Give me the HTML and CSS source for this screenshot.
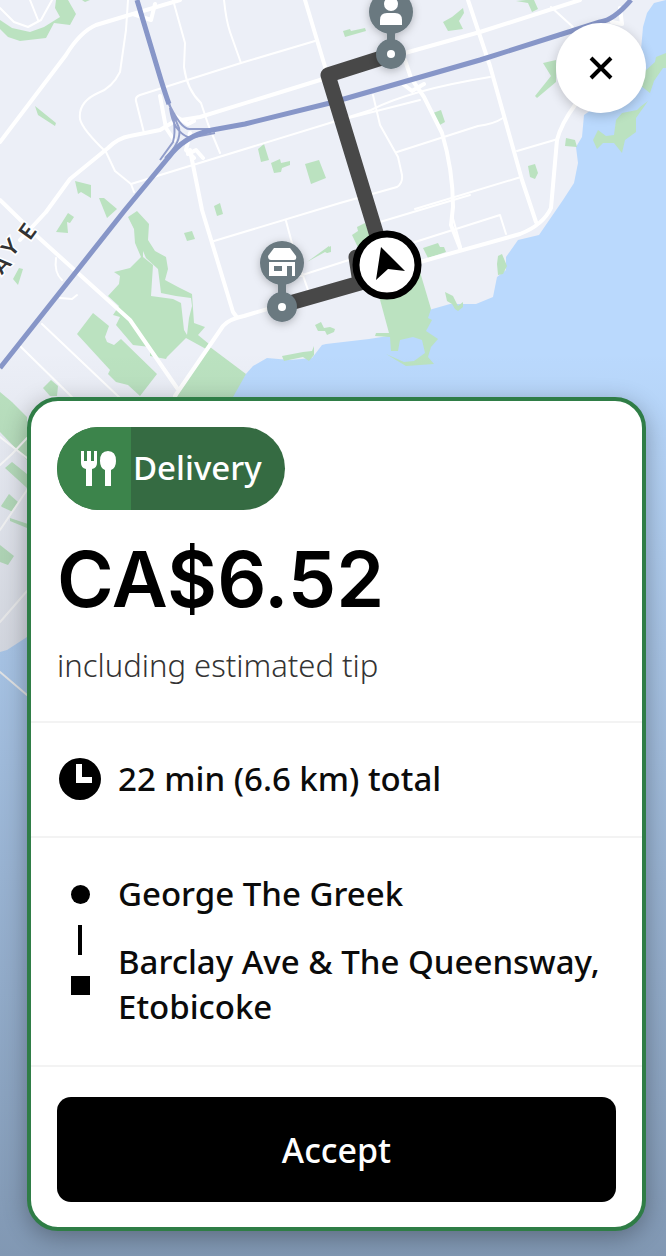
FILE: index.html
```html
<!DOCTYPE html>
<html lang="en">
<head>
<meta charset="utf-8">
<meta name="viewport" content="width=device-width, initial-scale=1">
<title>Delivery offer</title>
<link rel="stylesheet" href="styles.css">
</head>
<body>
<main class="screen">
  <svg class="map" viewBox="0 0 666 1256" preserveAspectRatio="xMidYMin slice" role="img" aria-label="Map with the delivery route">
    <defs>
      <linearGradient id="dim" x1="0" y1="0" x2="0" y2="1">
        <stop offset="0.28" stop-color="#1c2430" stop-opacity="0"/>
        <stop offset="0.5" stop-color="#1c2430" stop-opacity="0.12"/>
        <stop offset="1" stop-color="#1c2430" stop-opacity="0.36"/>
      </linearGradient>
      <filter id="soft" x="-40%" y="-40%" width="180%" height="180%">
        <feDropShadow dx="0" dy="2" stdDeviation="4" flood-color="#000" flood-opacity="0.25"/>
      </filter>
    </defs>
    <rect width="666" height="1256" fill="#eceff7"/>
    <path fill="#bad9fd" d="M666 0L654 3L647 13L643 27L641 50L620 90L584 115L582 137L576 147L578 163L574 183L563 200L539 235L518 240L506 257L506 270L497 277L493 297L476 304L450 304L429 310L426 318L430 322L426 330L369 339L326 344L322 345L312 358L290 360L267 358L253 366L245 375L225 408L160 520L100 590L27 637L7 650L0 652V1256H666Z"/>

    <g fill="#bbe2c0">
      <path d="M56 0H68L76 14L70 25L54 23L46 38L20 41L8 37L0 29V20L12 28L30 32L44 27L60 17L55 8Z"/>
      <path d="M82 0L85 2L90 0ZM35 106L56 123L55 126L38 115ZM75 181L91 185V198L81 192L78 194ZM99 198L104 198L117 209L107 218Z"/>
      <path d="M258 149L264 144L269 160L261 162ZM271 163L280 159L281 163L290 161V165L282 168L281 172L274 173ZM305 164L319 160L326 178L311 184ZM214 206L220 203L223 214L217 216ZM184 233L192 231L195 239L187 241Z"/>
      <path d="M68 213L74 217L70 223L67 222L68 233L56 232ZM19 268L23 269L18 285L13 279Z"/>
      <path d="M128 217L137 211L149 224L148 240L155 251L166 257L168 269L165 280L178 287L192 294L194 323L205 327L198 335L209 344L206 349L186 338L167 357L166 359L150 356V347L133 345L116 325L120 317L113 315L119 306L108 296L119 284L120 276L114 272L130 268L141 257L135 243L134 229Z"/>
      <path d="M93 313L109 326L105 337L107 342L114 345L121 339L157 374L140 396L128 385L116 382L108 374L110 370L77 334Z"/>
      <path d="M43 388L51 380L58 386L57 396H50ZM210 347L246 374L220 420L170 420L178 394Z"/>
      <path d="M307 262L329 246L331 250L327 253L325 252ZM315 325L321 322L324 328L330 327L335 329L334 332L327 335L325 331L318 331ZM282 356L303 352L312 351L314 346V355L309 361L303 357L284 361Z"/>
      <path d="M343 31L350 29L351 31L365 28L366 31L345 37ZM443 22L452 17L463 8L464 13L459 21L463 29L448 31ZM516 1L526 0H534L538 9L532 12L528 3ZM433 113L441 110L445 122L438 126ZM543 63L556 60V82L537 98L535 96L551 76ZM566 138L575 140L577 147L565 146ZM528 166L535 164L538 173L535 179L530 177Z"/>
      <path d="M666 53L656 57L655 62L644 72L636 82L650 93L654 81L663 68H666ZM648 101L640 107L637 110L622 113L616 120L614 135L606 136L598 130L593 140L597 149L603 143L614 143L622 153L625 140L636 132L636 118Z"/>
      <path d="M352 235L358 231L357 227L365 223L370 235L378 250L415 255L431 309L428 318L432 320L426 331L438 339L431 347L428 357L434 364L406 366L386 354L404 362L414 361L425 353L422 340L413 337L400 340L398 351L391 351L390 337L375 336L376 333L389 333L376 285Z"/>
      <path d="M423 248L438 243L440 247L444 247L446 252L428 258ZM498 256L502 254L507 266L503 274L498 275L497 264ZM445 292L453 296L458 306L463 302L463 307L458 311L455 309L452 304L447 301ZM326 249L331 246V252L327 253Z"/>
      <path d="M0 392L12 402L27 417V460L0 432ZM5 468L12 462L27 474V488ZM1 506L9 494L18 502L13 512L2 507ZM10 518L28 524L27 528L10 521ZM0 545L14 556L8 565L0 562Z"/>
    </g>
    <path fill="#eceff7" d="M143 251L146 258L158 269L161 293L176 296L191 298L192 306L189 318L187 335L184 330L181 303L173 299L151 296L153 265L143 257Z"/>

    <g fill="none" stroke="#fff" stroke-width="2" stroke-linejoin="round" stroke-linecap="round">
      <path d="M128 0L126 30L120 72Q112 88 98 93Q78 102 80 119Q82 129 106 152L115 171L131 184L134 192"/>
      <path d="M173 0L185 43L184 67Q187 90 201 103L208 124L220 153M224 0Q226 20 230 32L241 63L315 41"/>
      <path d="M241 63L140 95Q135 97 136 101L144 133M131 184L333 122L371 110Q410 90 490 77M333 122L420 100"/>
      <path d="M0 8L14 22L28 27L41 20L52 0M30 0L38 20"/>
      <path d="M214 241L340 203L397 187Q403 183 402 175L398 157L380 125L373 95M397 152L478 126Q494 124 503 118M415 209L521 177M286 221L293 247L308 290M293 278L352 259M380 222L470 195M415 242L500 215L506 234M452 215L461 247"/>
      <path d="M0 465L12 454L27 438M20 346L75 400M42 324L120 398M0 530L27 490M0 622L27 591M0 437L27 458M0 672L27 695M517 151L558 139M551 7L573 27L560 37M528 196L535 220"/>
      <path d="M60 298L72 299L77 295M56 258Q54 273 62 280"/>
    </g>
    <g fill="none" stroke="#fff" stroke-width="4" stroke-linejoin="round" stroke-linecap="round">
      <path d="M0 142L66 55Q80 32 96 25L126 16L180 0M305 0L326 70L345 120"/>
      <path d="M0 200L38 237L130 320L177 388M46 212L70 179L108 148Q118 138 130 136L160 130L175 121L200 117L320 80L340 74M46 212L20 240"/>
      <path d="M190 150L202 210L233 312L236 316M175 396L223 326Q229 319 244 316L352 284L420 262L520 234Q543 225 551 208L557 140Q561 124 575 105"/>
      <path d="M468 0L490 66L522 180L536 222M405 53L480 32L580 0M405 60L411 78L424 97L442 133Q453 170 453 207L451 225L460 248"/>
      <path d="M160 96L166 128L174 140M190 133L186 150L194 158M133 14L151 20L155 4M620 8L622 24L612 22"/>
      <path d="M175 116L188 124L194 121M188 154L196 150L203 158M403 84L412 91L424 84"/>
    </g>
    <g fill="none" stroke="#919dca" stroke-width="2">
      <path d="M167 100Q181 130 190 129L220 129M167 98Q178 124 173 142L160 160M169 104L179 128Q182 142 165 158M170 108Q173 132 190 138L215 133"/>
    </g>
    <path fill="none" stroke="#8796c8" stroke-width="5" stroke-linejoin="round" d="M137 0L161 80Q166 96 169 104"/>
    <path fill="none" stroke="#8796c8" stroke-width="5" stroke-linejoin="round" d="M0 368L125 210L168 158Q184 136 212 130L245 124L330 103L480 60L600 22Q614 20 631 0"/>

    <g class="map-label">
      <text transform="translate(2 265) rotate(-46)" y="7">A</text>
      <text transform="translate(11 248) rotate(-48)" y="7">Y</text>
      <text transform="translate(28 232) rotate(-54)" y="7">E</text>
    </g>
    <rect width="666" height="1256" fill="url(#dim)"/>

    <path fill="none" stroke="#484848" stroke-width="15" stroke-linejoin="round" d="M391 55L328 75L388 272L356 257L360 283L283 305"/>

    <g filter="url(#soft)" fill="#6a7980">
      <circle cx="391" cy="12" r="22"/>
      <path d="M387 30H395V44H387Z"/>
      <circle cx="391" cy="54" r="15"/>
      <circle cx="282" cy="263" r="22"/>
      <path d="M278 280H286V295H278Z"/>
      <circle cx="282" cy="307" r="15"/>
    </g>
    <g fill="#fff">
      <circle cx="391" cy="54" r="4"/>
      <circle cx="282" cy="307" r="4"/>
      <circle cx="391" cy="4" r="7"/>
      <path d="M380 25V20Q380 13 387 13H395Q402 13 402 20V25Z"/>
      <path d="M274 248H290L296 256Q297 260 294 260H271Q268 260 268 256Z"/>
      <path fill-rule="evenodd" d="M269 262H295V276H292V266H287V276H269ZM274 266V271H282V266Z"/>
    </g>

    <circle cx="387" cy="265" r="31" fill="#fff" stroke="#000" stroke-width="7"/>
    <path d="M381 247L405 271L388 269L376 280Z"/>
  </svg>

  <header class="top-bar">
    <button class="close" type="button" aria-label="Close">
      <svg class="close-icon" viewBox="0 0 24 24" aria-hidden="true"><path d="M2 2L22 22M22 2L2 22"/></svg>
    </button>
  </header>

  <article class="offer">
    <section class="summary">
      <div class="badge">
        <span class="badge-icon">
          <svg class="cutlery" viewBox="0 0 36 36" aria-hidden="true">
            <path d="M0 0H3V10H6V0H10V10H13V0H16V12Q16 17 11 18V35H5V18Q0 17 0 12Z"/>
            <path d="M27 0Q35 0 35 10Q35 17 30 19V35H24V19Q19 17 19 10Q19 0 27 0Z"/>
          </svg>
        </span>
        <span class="badge-text">Delivery</span>
      </div>
      <h1 class="price">CA$6.52</h1>
      <p class="note">including estimated tip</p>
    </section>

    <section class="row duration">
      <svg class="clock" viewBox="0 0 42 42" aria-hidden="true">
        <circle cx="21" cy="21" r="21"/>
        <path d="M17 6H23V19H33V25H17Z" fill="#fff"/>
      </svg>
      <p class="line">22 min (6.6 km) total</p>
    </section>

    <section class="row trip">
      <div class="track" aria-hidden="true">
        <span class="dot"></span>
        <span class="bar"></span>
        <span class="square"></span>
      </div>
      <div class="stops">
        <p class="line">George The Greek</p>
        <p class="line">Barclay Ave &amp; The Queensway, Etobicoke</p>
      </div>
    </section>

    <section class="actions">
      <button class="accept" type="button">Accept</button>
    </section>
  </article>
</main>
</body>
</html>
```
FILE: styles.css
```css
* {
  box-sizing: border-box;
}

body {
  margin: 0;
  color: #0b0b0b;
  font-family: "Noto Sans", "Open Sans", sans-serif;
}

h1,
p {
  margin: 0;
}

.screen {
  position: relative;
  display: flex;
  flex-direction: column;
  justify-content: space-between;
  gap: 24px;
  min-height: 100vh;
  padding: 23px 20px 25px 27px;
  overflow: hidden;
  background: #eceff7;
}

.map {
  position: absolute;
  inset: 0;
  width: 100%;
  height: 100%;
}

.map-label {
  fill: #333;
  stroke: #fff;
  stroke-width: 3px;
  paint-order: stroke;
  text-anchor: middle;
  font-family: Lato, sans-serif;
  font-size: 22px;
  font-weight: 700;
}

.top-bar {
  position: relative;
  display: flex;
  justify-content: flex-end;
}

.close {
  display: grid;
  place-items: center;
  width: 90px;
  height: 90px;
  padding: 0;
  border: 0;
  border-radius: 50%;
  background: #fff;
  box-shadow: 0 3px 12px rgba(0, 0, 0, 0.2);
}

.close-icon {
  width: 24px;
  height: 24px;
  fill: none;
  stroke: #000;
  stroke-width: 4;
}

.offer {
  position: relative;
  border: 4px solid #2f7d46;
  border-radius: 31px;
  background: #fff;
  box-shadow: 0 6px 24px rgba(0, 0, 0, 0.3);
}

.summary {
  padding: 26px 26px 35px;
}

.badge {
  display: flex;
  width: fit-content;
  overflow: hidden;
  border-radius: 42px;
  background: #356b42;
  color: #fff;
}

.badge-icon {
  display: flex;
  align-items: center;
  padding: 0 14px 0 24px;
  background: #3c844b;
}

.cutlery {
  width: 36px;
  height: 36px;
  fill: #fff;
}

.badge-text {
  padding: 0 23px 1px 2px;
  font-size: 33px;
  font-weight: 500;
  line-height: 82px;
}

.price {
  margin-top: 21px;
  color: #000;
  font-family: Inter, sans-serif;
  font-size: 77px;
  font-weight: 600;
  line-height: 96px;
}

.note {
  margin-top: 18px;
  padding-bottom: 1px;
  color: #333;
  font-size: 31px;
  font-weight: 300;
  line-height: 40px;
}

.row {
  display: flex;
  gap: 17px;
  padding: 0 28px;
  border-top: 2px solid #f3f3f3;
}

.duration {
  align-items: center;
  padding-top: 33px;
  padding-bottom: 35px;
}

.clock {
  flex: none;
  width: 42px;
  height: 42px;
}

.line {
  font-size: 33px;
  font-weight: 500;
  line-height: 45px;
}

.trip {
  padding-top: 33px;
  padding-bottom: 36px;
}

.track {
  display: flex;
  flex: none;
  flex-direction: column;
  align-items: center;
  width: 42px;
  padding-top: 14px;
}

.dot {
  width: 19px;
  height: 19px;
  border-radius: 50%;
  background: #000;
}

.bar {
  width: 4px;
  height: 30px;
  margin: 21px 0;
  background: #000;
}

.square {
  width: 19px;
  height: 19px;
  background: #000;
}

.stops {
  display: grid;
  gap: 23px;
}

.actions {
  padding: 30px 26px 25px;
  border-top: 2px solid #f3f3f3;
}

.accept {
  width: 100%;
  height: 105px;
  border: 0;
  border-radius: 14px;
  background: #000;
  color: #fff;
  font-family: inherit;
  font-size: 34px;
  font-weight: 500;
}
```
